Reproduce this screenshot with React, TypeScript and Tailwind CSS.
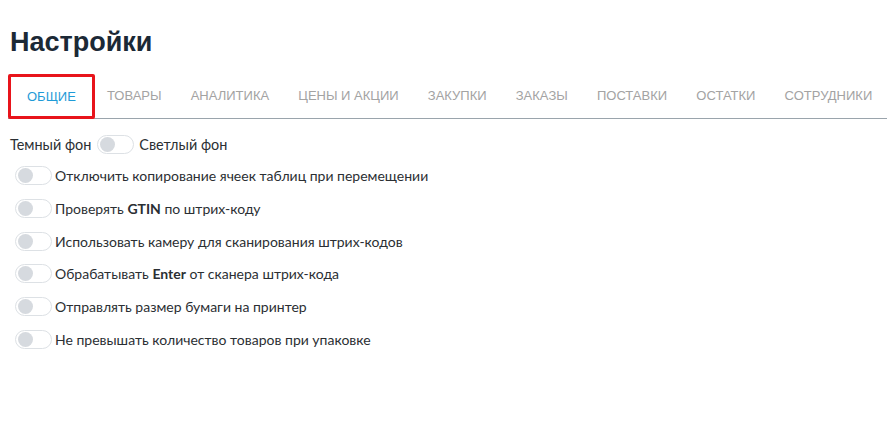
const TABS = [
  "ОБЩИЕ",
  "ТОВАРЫ",
  "АНАЛИТИКА",
  "ЦЕНЫ И АКЦИИ",
  "ЗАКУПКИ",
  "ЗАКАЗЫ",
  "ПОСТАВКИ",
  "ОСТАТКИ",
  "СОТРУДНИКИ",
];

function Toggle() {
  return (
    <span className="inline-flex items-center w-[37px] h-[19px] rounded-full border border-[#dde1e5] bg-white px-[2px] shrink-0">
      <span className="block w-[15px] h-[15px] rounded-full bg-[#d6dadf]" />
    </span>
  );
}

const OPTIONS: React.ReactNode[] = [
  "Отключить копирование ячеек таблиц при перемещении",
  <>
    Проверять <b className="font-bold">GTIN</b> по штрих-коду
  </>,
  "Использовать камеру для сканирования штрих-кодов",
  <>
    Обрабатывать <b className="font-bold">Enter</b> от сканера штрих-кода
  </>,
  "Отправлять размер бумаги на принтер",
  "Не превышать количество товаров при упаковке",
];

export default function App() {
  return (
    <div className="min-h-[433px] bg-white pt-[26px] pl-[10px] pr-[8px] text-[14px] text-[#2b2f33]">
      <h1 className="font-['Liberation_Sans',Arial,sans-serif] font-bold text-[27px] leading-[32px] text-[#1b2936]">
        Настройки
      </h1>
      <div className="mt-[16px] -ml-[2px] flex border-b border-[#9aa4ac] font-['Liberation_Sans',Arial,sans-serif] text-[13px] whitespace-nowrap">
        {TABS.map((t, i) =>
          i === 0 ? (
            <div
              key={t}
              className="h-[45px] -mb-px shrink-0 flex items-center px-[16px] border-[3px] border-[#e8141b] rounded-[2px] text-[#1f9bd7]"
            >
              {t}
            </div>
          ) : (
            <div
              key={t}
              className={`h-[44px] shrink-0 flex items-center px-[14.6px] text-[#a3a3a3] ${
                i === 1 ? "-ml-[2.5px]" : ""
              }`}
            >
              {t}
            </div>
          )
        )}
      </div>
      <div className="mt-[16px] flex items-center gap-[5px] leading-[18px] text-[14.4px] font-['Lato',sans-serif]">
        <span className="mr-[1px]">Темный фон</span>
        <Toggle />
        <span>Светлый фон</span>
      </div>
      <div className="mt-[12px] pl-[5px] flex flex-col gap-[13.8px] font-['Lato',sans-serif]">
        {OPTIONS.map((o, i) => (
          <div key={i} className="flex items-center gap-[3px] leading-[19px]">
            <Toggle />
            <span>{o}</span>
          </div>
        ))}
      </div>
    </div>
  );
}
